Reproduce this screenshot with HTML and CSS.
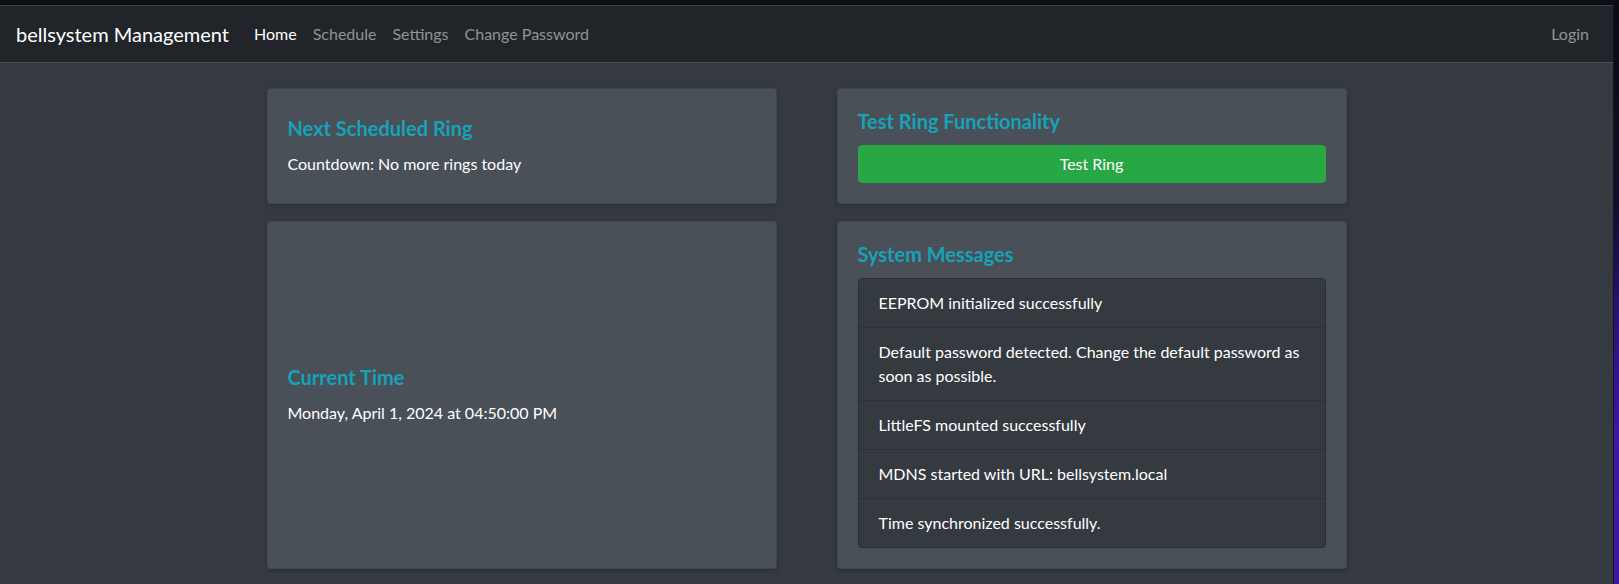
FILE: index.html
```html
<!DOCTYPE html>
<html lang="en">
<head>
<meta charset="utf-8">
<title>bellsystem Management</title>
<link rel="stylesheet" href="styles.css">
</head>
<body>
<div class="window">
  <div class="page">
    <div class="chrome-top"></div>
    <nav class="navbar">
      <a class="brand" href="#">bellsystem Management</a>
      <ul class="nav">
        <li><a class="nav-link active" href="#">Home</a></li>
        <li><a class="nav-link" href="#">Schedule</a></li>
        <li><a class="nav-link" href="#">Settings</a></li>
        <li><a class="nav-link" href="#">Change Password</a></li>
      </ul>
      <ul class="nav nav-right">
        <li><a class="nav-link" href="#">Login</a></li>
      </ul>
    </nav>
    <main class="container">
      <div class="grid">
        <section class="card card-center">
          <h5 class="card-title">Next Scheduled Ring</h5>
          <p class="card-text">Countdown: No more rings today</p>
        </section>
        <section class="card">
          <h5 class="card-title">Test Ring Functionality</h5>
          <button class="btn btn-success" type="button">Test Ring</button>
        </section>
        <section class="card card-center">
          <h5 class="card-title">Current Time</h5>
          <p class="card-text">Monday, April 1, 2024 at 04:50:00 PM</p>
        </section>
        <section class="card">
          <h5 class="card-title">System Messages</h5>
          <ul class="list-group">
            <li class="list-item">EEPROM initialized successfully</li>
            <li class="list-item">Default password detected. Change the default password as soon as possible.</li>
            <li class="list-item">LittleFS mounted successfully</li>
            <li class="list-item">MDNS started with URL: bellsystem.local</li>
            <li class="list-item">Time synchronized successfully.</li>
          </ul>
        </section>
      </div>
    </main>
  </div>
  <div class="desktop-edge"></div>
</div>
</body>
</html>
```

FILE: styles.css
```css
* { box-sizing: border-box; }
html, body { margin: 0; padding: 0; }
body {
  font-family: Lato, "Open Sans", sans-serif;
  font-size: 16px;
  line-height: 1.5;
  color: #fff;
  background: #343a40;
  overflow: hidden;
}
.window { display: flex; width: 1619px; height: 584px; }
.page { width: 1613px; height: 584px; background: #343a40; display: flex; flex-direction: column; }
.desktop-edge {
  width: 6px;
  background: linear-gradient(180deg, #0b0a14 0%, #120d2a 35%, #2a127a 55%, #3c17a8 75%, #3a18a0 100%);
  border-left: 1px solid #16131f;
}
.chrome-top { height: 6px; background: #0c0e13; border-bottom: 1px solid #3b3f45; flex: none; }
.navbar {
  flex: none;
  height: 57px;
  display: flex;
  align-items: center;
  padding: 8px 16px;
  background: #212529;
  border-bottom: 1px solid #4b5057;
}
.brand {
  color: #fff;
  font-size: 20px;
  text-decoration: none;
  margin-right: 17px;
  line-height: 30px;
  padding: 5px 0;
}
.nav { list-style: none; margin: 0; padding: 0; display: flex; }
.nav-right { margin-left: auto; }
.nav-link {
  display: block;
  padding: 8px;
  color: rgba(255,255,255,.5);
  text-decoration: none;
}
.nav-link.active { color: #fff; }
.container { width: 1080px; margin: 25px auto 0; }
.grid {
  display: grid;
  grid-template-columns: 510px 510px;
  column-gap: 60px;
  row-gap: 17px;
}
.card {
  background: #495057;
  border: 1px solid rgba(0,0,0,.125);
  border-radius: 4px;
  padding: 20px;
  box-shadow: 0 2px 4px rgba(0,0,0,.2);
}
.card-center { display: flex; flex-direction: column; justify-content: center; }
.card-title {
  margin: 0 0 12px;
  font-size: 20px;
  font-weight: 700;
  line-height: 1.2;
  color: #17a2b8;
}
.card-text { margin: 0; }
.btn {
  display: block;
  width: 100%;
  font: inherit;
  color: #fff;
  background: #28a745;
  border: 1px solid #28a745;
  border-radius: 4px;
  padding: 6px 12px;
  line-height: 1.5;
}
.list-group {
  list-style: none;
  margin: 0;
  padding: 0;
  border: 1px solid #2a2e33;
  border-radius: 4px;
  background: #343a40;
}
.list-item {
  padding: 12px 20px;
  border-top: 1px solid #2c3136;
}
.list-item:first-child { border-top: 0; }
```
